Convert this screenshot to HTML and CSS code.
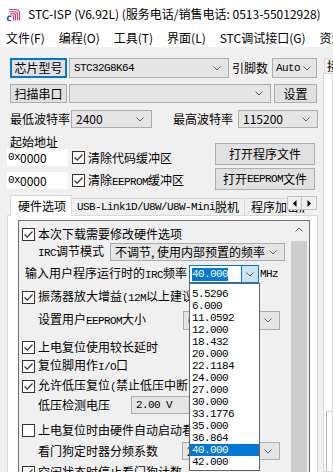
FILE: index.html
```html
<!DOCTYPE html>
<html lang="zh">
<head>
<meta charset="utf-8">
<title>STC-ISP</title>
<link rel="stylesheet" href="styles.css">
</head>
<body>
<div class="titlebar">
  <svg class="logo" viewBox="0 0 15 13" width="15" height="13">
    <path d="M3 1.5H9.5Q13.5 1.5 13.5 5.5V12.5" fill="none" stroke="#e8336b" stroke-width="1.1"/>
    <path d="M3 3.7H9Q11.5 3.7 11.5 6.2V12.5" fill="none" stroke="#e8336b" stroke-width="1.1"/>
    <path d="M4.5 5.9H8.4Q9.5 5.9 9.5 7V12.5" fill="none" stroke="#e8336b" stroke-width="1.1"/>
    <path d="M6 8H7.5V12.5" fill="none" stroke="#e8336b" stroke-width="1.1"/>
    <path d="M5.2 8.4A2.4 2.4 0 1 0 5.2 12.6" fill="none" stroke="#1f4fc4" stroke-width="1.6"/>
  </svg>
  <span class="title">STC-ISP (V6.92L) (服务电话/销售电话: 0513-55012928)</span>
</div>
<div class="menubar">
  <span>文件(F)</span><span>编程(O)</span><span>工具(T)</span><span>界面(L)</span><span>STC调试接口(G)</span><span>资源</span>
</div>
<div class="main">
  <div class="left">
    <div class="row r1">
      <div class="btn btn-focus w-chipbtn">芯片型号</div>
      <div class="sel s-chip"><span class="m">STC32G8K64</span><svg class="chev" viewBox="0 0 8 5" width="8" height="5"><polyline points="0.5,0.5 4,4 7.5,0.5"/></svg></div>
      <span class="lbl l-pins">引脚数</span>
      <div class="sel s-auto"><span class="m">Auto</span><svg class="chev" viewBox="0 0 8 5" width="8" height="5"><polyline points="0.5,0.5 4,4 7.5,0.5"/></svg></div>
    </div>
    <div class="row r2">
      <div class="btn w-chipbtn">扫描串口</div>
      <div class="sel s-port"><svg class="chev" viewBox="0 0 8 5" width="8" height="5"><polyline points="0.5,0.5 4,4 7.5,0.5"/></svg></div>
      <div class="btn w-set">设置</div>
    </div>
    <div class="row r3">
      <span class="lbl l-baud">最低波特率</span>
      <div class="sel s-baud"><span>2400</span><svg class="chev" viewBox="0 0 8 5" width="8" height="5"><polyline points="0.5,0.5 4,4 7.5,0.5"/></svg></div>
      <span class="lbl l-baud2">最高波特率</span>
      <div class="sel s-baud2"><span>115200</span><svg class="chev" viewBox="0 0 8 5" width="8" height="5"><polyline points="0.5,0.5 4,4 7.5,0.5"/></svg></div>
    </div>
    <div class="addr">
      <div class="addr-left">
        <span class="lbl l-addr">起始地址</span>
        <div class="row addr-row">
          <div class="inp"><span class="m">0x</span>0000</div>
          <span class="cb"><svg viewBox="0 0 13 13" width="13" height="13"><polyline points="2.5,6.5 5.2,9.2 10.5,3.5" fill="none" stroke="#333" stroke-width="1.2"/></svg></span>
          <span class="cbl">清除代码缓冲区</span>
        </div>
        <div class="row addr-row addr-row2">
          <div class="inp"><span class="m">0x</span>0000</div>
          <span class="cb"><svg viewBox="0 0 13 13" width="13" height="13"><polyline points="2.5,6.5 5.2,9.2 10.5,3.5" fill="none" stroke="#333" stroke-width="1.2"/></svg></span>
          <span class="cbl">清除<span class="m">EEPROM</span>缓冲区</span>
        </div>
      </div>
      <div class="addr-right">
        <div class="btn w-open">打开程序文件</div>
        <div class="btn w-open w-open2">打开<span class="m">EEPROM</span>文件</div>
      </div>
    </div>
    <div class="tabs">
      <div class="tab tab-on">硬件选项</div>
      <div class="tab tab-usb"><span class="m">USB-Link1D/U8W/U8W-Mini</span>脱机</div>
      <div class="tab tab-enc">程序加密后传输</div>
      <div class="tab-arrows">
        <span class="tarr"><svg viewBox="0 0 4 7" width="4" height="7"><polygon points="3.5,0 0,3.5 3.5,7"/></svg></span>
        <span class="tarr"><svg viewBox="0 0 4 7" width="4" height="7"><polygon points="0.5,0 4,3.5 0.5,7"/></svg></span>
      </div>
    </div>
    <div class="panel">
      <div class="optbox">
        <div class="opts">
          <div class="orow">
            <span class="cb"><svg viewBox="0 0 13 13" width="13" height="13"><polyline points="2.5,6.5 5.2,9.2 10.5,3.5" fill="none" stroke="#333" stroke-width="1.2"/></svg></span>
            <span class="cbl">本次下载需要修改硬件选项</span>
          </div>
          <div class="orow">
            <span class="olbl ol-irc"><span class="m">IRC</span>调节模式</span>
            <div class="sel s-irc"><span>不调节, 使用内部预置的频率</span><svg class="chev" viewBox="0 0 8 5" width="8" height="5"><polyline points="0.5,0.5 4,4 7.5,0.5"/></svg></div>
          </div>
          <div class="orow mt4">
            <span class="olbl ol-freq">输入用户程序运行时的<span class="m">IRC</span>频率</span>
            <div class="combo">
              <span class="combo-text"><span class="m hl">40.000</span></span>
              <span class="combo-btn"><svg class="chev" viewBox="0 0 8 5" width="8" height="5"><polyline points="0.5,0.5 4,4 7.5,0.5"/></svg></span>
              <ul class="drop">
                <li>5.5296</li><li>6.000</li><li>11.0592</li><li>12.000</li><li>18.432</li><li>20.000</li><li>22.1184</li><li>24.000</li><li>27.000</li><li>30.000</li><li>33.1776</li><li>35.000</li><li>36.864</li><li class="on">40.000</li><li>42.000</li>
              </ul>
            </div>
            <span class="m unit">MHz</span>
          </div>
          <div class="orow mt5">
            <span class="cb"><svg viewBox="0 0 13 13" width="13" height="13"><polyline points="2.5,6.5 5.2,9.2 10.5,3.5" fill="none" stroke="#333" stroke-width="1.2"/></svg></span>
            <span class="cbl">振荡器放大增益<span class="m">(12M</span>以上建议选择<span class="m">)</span></span>
          </div>
          <div class="orow mt5">
            <span class="olbl ol-ee">设置用户<span class="m">EEPROM</span>大小</span>
            <div class="sel s-ee"><span>0K</span><svg class="chev" viewBox="0 0 8 5" width="8" height="5"><polyline points="0.5,0.5 4,4 7.5,0.5"/></svg></div>
          </div>
          <div class="orow mt9">
            <span class="cb"><svg viewBox="0 0 13 13" width="13" height="13"><polyline points="2.5,6.5 5.2,9.2 10.5,3.5" fill="none" stroke="#333" stroke-width="1.2"/></svg></span>
            <span class="cbl">上电复位使用较长延时</span>
          </div>
          <div class="orow mt1">
            <span class="cb"><svg viewBox="0 0 13 13" width="13" height="13"><polyline points="2.5,6.5 5.2,9.2 10.5,3.5" fill="none" stroke="#333" stroke-width="1.2"/></svg></span>
            <span class="cbl">复位脚用作<span class="m">I/O</span>口</span>
          </div>
          <div class="orow mt2">
            <span class="cb"><svg viewBox="0 0 13 13" width="13" height="13"><polyline points="2.5,6.5 5.2,9.2 10.5,3.5" fill="none" stroke="#333" stroke-width="1.2"/></svg></span>
            <span class="cbl">允许低压复位<span class="m">(</span>禁止低压中断<span class="m">)</span></span>
          </div>
          <div class="orow mt1">
            <span class="olbl ol-lv">低压检测电压</span>
            <div class="sel s-lv"><span class="m">2.00 V</span><svg class="chev" viewBox="0 0 8 5" width="8" height="5"><polyline points="0.5,0.5 4,4 7.5,0.5"/></svg></div>
          </div>
          <div class="orow mt7">
            <span class="cb cb-off"></span>
            <span class="cbl">上电复位时由硬件自动启动看门狗</span>
          </div>
          <div class="orow mt3">
            <span class="olbl ol-wd">看门狗定时器分频系数</span>
            <div class="sel s-wd"><span>256</span><svg class="chev" viewBox="0 0 8 5" width="8" height="5"><polyline points="0.5,0.5 4,4 7.5,0.5"/></svg></div>
          </div>
          <div class="orow mt3">
            <span class="cb"><svg viewBox="0 0 13 13" width="13" height="13"><polyline points="2.5,6.5 5.2,9.2 10.5,3.5" fill="none" stroke="#333" stroke-width="1.2"/></svg></span>
            <span class="cbl">空闲状态时停止看门狗计数</span>
          </div>
        </div>
        <div class="vscroll">
          <span class="vup"><svg viewBox="0 0 8 5" width="8" height="5"><polyline points="0.5,4.5 4,1 7.5,4.5"/></svg></span>
          <span class="vthumb"></span>
        </div>
      </div>
    </div>
  </div>
  <div class="right">
    <div class="rtab">接收缓冲区</div>
    <div class="rpanel">
      <div class="rbox"></div>
    </div>
  </div>
</div>
</body>
</html>
```
FILE: styles.css
```css
* { box-sizing: border-box; margin: 0; padding: 0; }
html, body { width: 333px; height: 472px; overflow: hidden; }
body {
  background: #f0f0f0;
  font-family: "Noto Sans CJK SC", "Noto Sans", sans-serif;
  font-size: 12px;
  line-height: 1;
  color: #000;
}
.m {
  font-family: "Liberation Mono", "Noto Sans CJK SC", monospace;
  font-size: 11px;
  letter-spacing: -0.6px;
}

/* title + menu */
.titlebar {
  height: 28px; background: #fff; display: flex; align-items: center;
  padding-left: 6px; white-space: nowrap;
}
.logo { margin-right: 7px; flex: none; }
.title { font-size: 12px; }
.menubar {
  height: 19px; background: #fff; display: flex; align-items: center;
  gap: 14px; padding-left: 6px; white-space: nowrap;
}

/* main */
.main { display: flex; height: 425px; }
.left { width: 320px; flex: none; padding: 11px 0 0 10px; display: flex; flex-direction: column; }
.row { display: flex; align-items: center; white-space: nowrap; }

.btn {
  background: #e1e1e1; border: 1px solid #adadad;
  display: flex; align-items: center; justify-content: center;
  white-space: nowrap; flex: none;
}
.btn-focus { border: 2px solid #0078d7; }
.sel {
  background: #e5e5e5; border: 1px solid #acacac;
  display: flex; align-items: center; padding-left: 4px;
  white-space: nowrap; overflow: hidden; flex: none;
}
.chev { margin-left: auto; margin-right: 7px; flex: none; }
.chev polyline, .vup polyline { fill: none; stroke: #606060; stroke-width: 1; }
.lbl { flex: none; }

.r1 { height: 20px; }
.w-chipbtn { width: 57px; height: 100%; }
.s-chip { width: 160px; height: 20px; margin-left: 2px; }
.l-pins { margin-left: 3px; width: 36px; }
.s-auto { width: 45px; height: 20px; margin-left: 4px; padding-left: 3px; }
.s-auto .chev { margin-right: 5px; }

.r2 { height: 19px; margin-top: 6px; }
.s-port { width: 202px; height: 19px; margin-left: 2px; }
.w-set { width: 43px; height: 19px; margin-left: 3px; }

.r3 { height: 18px; margin-top: 7px; }
.l-baud { width: 61px; }
.s-baud { width: 81px; height: 18px; }
.l-baud2 { width: 65px; margin-left: 21px; }
.s-baud2 { width: 80px; height: 18px; }

/* address block */
.addr { display: flex; margin-top: 6px; }
.addr-left { display: flex; flex-direction: column; }
.l-addr { margin-top: 2px; height: 13px; }
.addr-row { height: 17px; margin-left: -3px; }
.addr-row2 { margin-top: 6px; }
.inp { width: 61px; height: 17px; background: #fff; display: flex; align-items: center; padding-left: 1px; }
.cb {
  width: 13px; height: 13px; border: 1px solid #333; background: #fff;
  display: inline-flex; flex: none; margin-left: 4px; overflow: hidden;
}
.cb svg { margin: -1px; flex: none; }
.cbl { margin-left: 3px; white-space: nowrap; }
.addr-right { display: flex; flex-direction: column; margin-left: auto; margin-right: 5px; margin-top: 9px; }
.w-open { width: 100px; height: 22px; }
.w-open2 { margin-top: 3px; }

/* tabs */
.tabs { display: flex; align-items: flex-end; height: 20px; margin-top: 5px; position: relative; z-index: 1; }
.tab {
  height: 17px; border: 1px solid #d9d9d9; border-bottom: none; background: #f0f0f0;
  display: flex; align-items: center; padding-left: 6px; white-space: nowrap; overflow: hidden; flex: none;
}
.tab-on { height: 21px; margin-bottom: -1px; background: #fff; width: 62px; padding-left: 7px; }
.tab-usb { width: 173px; border-left: none; padding-left: 5px; }
.tab-enc { width: 60px; border-left: none; }
.tab-arrows { position: absolute; left: 277px; top: 1px; display: flex; }
.tarr {
  width: 15px; height: 14px; background: #f0f0f0; border: 1px solid #c4c4c4;
  display: flex; align-items: center; justify-content: center;
}
.tarr + .tarr { border-left: none; }
.tarr polygon { fill: #000; }

.panel {
  margin-left: -3px; width: 311px; flex: 1;
  background: #fff; border: 1px solid #d9d9d9; border-bottom: none;
  padding: 4px 7px 0 10px; display: flex;
}
.optbox { width: 292px; border: 1px solid #6e6e6e; border-bottom: none; background: #f0f0f0; display: flex; }
.opts { flex: 1; padding: 4px 0 0 0; min-width: 0; }
.orow { display: flex; align-items: center; height: 18px; white-space: nowrap; }
.orow > .cb { margin-left: 3px; }
.mt1 { margin-top: 1px; } .mt2 { margin-top: 2px; } .mt3 { margin-top: 3px; }
.mt4 { margin-top: 4px; } .mt5 { margin-top: 5px; } .mt7 { margin-top: 7px; } .mt9 { margin-top: 9px; }
.olbl { flex: none; white-space: nowrap; }
.ol-irc { margin-left: 19px; width: 72px; }
.s-irc { width: 175px; height: 18px; }
.ol-freq { margin-left: 6px; width: 164px; }
.ol-ee { margin-left: 19px; width: 145px; }
.s-ee { width: 97px; height: 19px; }
.ol-lv { margin-left: 19px; width: 93px; }
.s-lv { width: 100px; height: 18px; padding-left: 4px; }
.ol-wd { margin-left: 19px; width: 144px; }
.s-wd { width: 98px; height: 18px; }

.combo {
  position: relative; width: 70px; height: 18px; background: #fff;
  border: 1px solid #0078d7; display: flex; align-items: stretch; flex: none;
}
.combo-text { flex: 1; display: flex; align-items: center; padding-left: 2px; }
.hl { background: #0078d7; color: #fff; padding: 1px 0; }
.combo-btn {
  width: 17px; background: #cce4f7; border-left: 1px solid #0078d7;
  display: flex; align-items: center; justify-content: center;
}
.combo-btn .chev { margin: 0; }
.unit { margin-left: 1px; }
.drop {
  list-style: none; position: absolute; left: -1px; top: 17px; width: 71px;
  background: #fff; border: 1px solid #646464; padding: 4px 0 2px 0; z-index: 5;
}
.drop li {
  height: 12px; line-height: 12px; padding-left: 2px;
  font-family: "Liberation Mono", monospace; font-size: 11px; letter-spacing: -0.6px;
}
.drop li.on { background: #0078d7; color: #fff; }

.vscroll { width: 18px; display: flex; flex-direction: column; background: #f0f0f0; flex: none; }
.vup { height: 17px; display: flex; align-items: center; justify-content: center; padding-right: 2px; }
.vthumb { margin-top: 3px; width: 16px; flex: 1; background: #cdcdcd; }

/* right strip */
.right { flex: 1; padding-top: 11px; display: flex; flex-direction: column; overflow: hidden; }
.rtab {
  margin-left: 4px; height: 15px; width: 60px; border: 1px solid #d9d9d9; border-bottom: none;
  padding-left: 2px; display: flex; align-items: center; white-space: nowrap; background: #f0f0f0;
}
.rpanel {
  flex: 1; margin-left: 3px; background: #fff; border: 1px solid #d9d9d9;
  display: flex; flex-direction: column; justify-content: flex-end;
}
.rbox { height: 60px; border-top: 1px solid #d9d9d9; margin-left: 2px; border-left: 1px solid #adadad; }
```
